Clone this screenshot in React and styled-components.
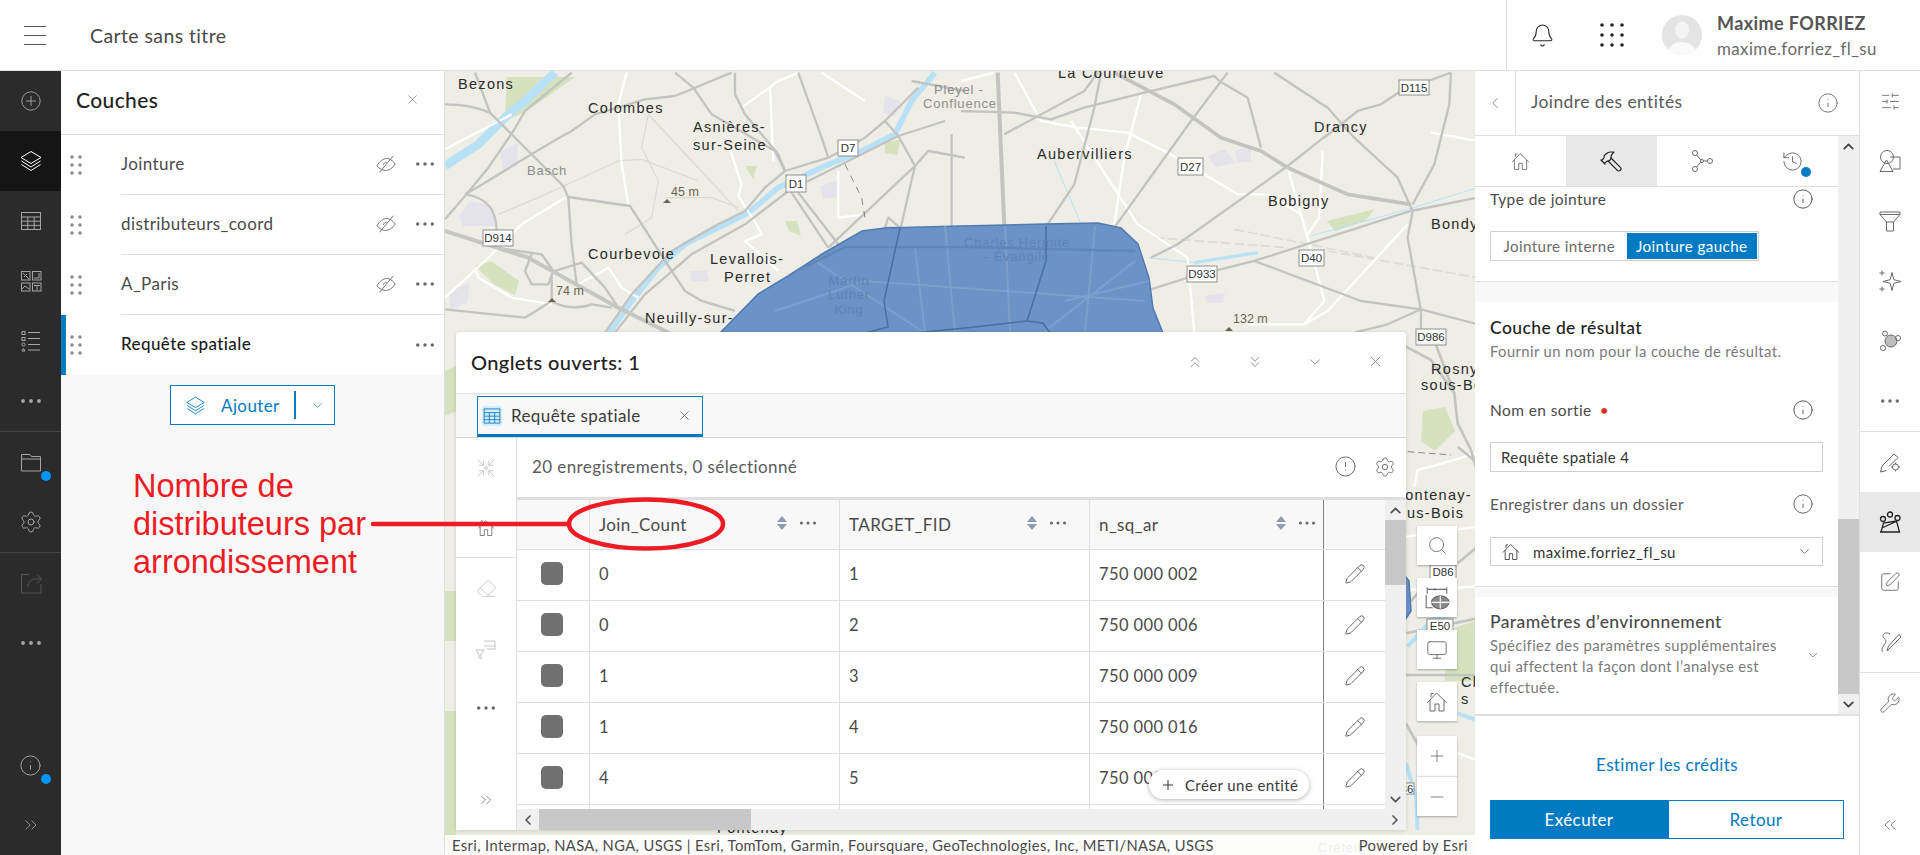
import styled, { createGlobalStyle } from 'styled-components';
import {
  Bell, Settings, Info, X, ChevronDown, ChevronUp, ChevronLeft, ChevronRight, ChevronsUp, ChevronsDown,
  ChevronsRight, ChevronsLeft, Hammer, History, SlidersHorizontal, SquarePen,
  Wrench, Search, Monitor, Plus, Minus, Pencil, CircleAlert, Eraser,
} from 'lucide-react';

const UI_FONT = 'Lato, "Noto Sans", sans-serif';
const BLUE = '#007ac2';

const GlobalStyle = createGlobalStyle`
  html, body {
    margin: 0;
    padding: 0;
    height: 855px;
    overflow: hidden;
    font-family: ${UI_FONT};
    letter-spacing: 0.4px;
    color: #4a4a4a;
  }
  * { box-sizing: border-box; }
`;

/* small hand drawn icons */
function Glyph({ size = 24, sw = 1, children }) {
  return (
    <svg width={size} height={size} viewBox="0 0 24 24" fill="none" stroke="currentColor" strokeWidth={sw}>
      {children}
    </svg>
  );
}

const Dots = ({ size = 22 }) => (
  <svg width={size} height={size} viewBox="0 0 22 22" fill="currentColor">
    <circle cx="3" cy="11" r="1.9" />
    <circle cx="11" cy="11" r="1.9" />
    <circle cx="19" cy="11" r="1.9" />
  </svg>
);

const DragHandle = () => (
  <svg width="12" height="20" viewBox="0 0 12 20" fill="#8c8c8c">
    {[2, 10, 18].map((y) => [2, 10].map((x) => <circle key={`${x}${y}`} cx={x} cy={y} r="1.8" />))}
  </svg>
);

const LayersIcon = ({ size = 24 }) => (
  <Glyph size={size}>
    <path d="M12 2.5 22 8.5 12 14.5 2 8.5z" />
    <path d="M2.5 12 12 18 21.5 12" />
    <path d="M2.5 15.5 12 21.5 21.5 15.5" />
  </Glyph>
);

const HomeIcon = ({ size = 24 }) => (
  <Glyph size={size}>
    <path d="M2.5 12.5 11.5 3l10 9.5" />
    <path d="M5 10v11h5v-7h4v7h5V10" />
    <path d="M6 7V3.5h2.5" />
  </Glyph>
);

const TableIcon = ({ size = 24 }) => (
  <Glyph size={size}>
    <rect x="2.5" y="3.5" width="19" height="17" />
    <path d="M2.5 8h19M2.5 12.2h19M2.5 16.4h19M8.8 8v12.5M15.2 8v12.5" />
  </Glyph>
);

const DashIcon = () => (
  <Glyph>
    <rect x="2.5" y="2.5" width="8.5" height="8.5" />
    <rect x="13.5" y="2.5" width="8.5" height="8.5" />
    <rect x="2.5" y="14" width="8.5" height="8" />
    <rect x="13.5" y="14" width="8.5" height="8" />
    <path d="M4 4l6 6M5 8l3-3M15 9h5V4M3 20l3-3 4 3M15 16.5h6M18 16.5v5" />
  </Glyph>
);

const ListIcon = () => (
  <Glyph>
    <path d="M9 3.5h12M9 9.5h12M9 15.5h12M9 21h12" />
    <rect x="3" y="2.5" width="3" height="3" />
    <rect x="3" y="8.5" width="3" height="3" />
    <circle cx="4.5" cy="15.5" r="1.6" />
    <path d="M3 22l1.5-2.5L6 22z" />
  </Glyph>
);

const FolderIcon = () => (
  <Glyph>
    <path d="M2.5 21V4.5h8.5l1.5 2h9V21z" />
    <path d="M2.5 9h19" />
  </Glyph>
);

const ShareIcon = () => (
  <Glyph>
    <path d="M10 3.5H2.5V22H22v-9" />
    <path d="M9 16c0-5 3-8 8-8h5M18 3.5 22.5 8 18 12.5" />
  </Glyph>
);

const CircleInfo = ({ size = 23 }) => <Info size={size} strokeWidth={1} />;

const HiddenEye = () => (
  <Glyph size={22}>
    <path d="M2 14c3-5 7-8 11-8 3 0 6 2 9 6-3 5-7 7-11 7-3 0-6-2-9-5z" />
    <path d="M5 21 20 3" />
    <path d="M9 13c1-2 2-3 4-3" />
  </Glyph>
);

const BranchIcon = () => (
  <Glyph>
    <circle cx="5" cy="4" r="2.5" />
    <circle cx="5" cy="20" r="2.5" />
    <circle cx="20" cy="12" r="2.5" />
    <circle cx="12" cy="12" r="1.5" />
    <path d="M6.5 6 11 11M6.5 18l4.500-5M13.500 12h4" />
  </Glyph>
);

const ClusterIcon = () => (
  <Glyph>
    <circle cx="13" cy="12" r="6" fill="#bdbdbd" />
    <circle cx="7" cy="4.500" r="2.500" />
    <circle cx="20" cy="9" r="2.500" />
    <circle cx="5" cy="19" r="2.500" />
  </Glyph>
);

const ShapesIcon = () => (
  <Glyph>
    <circle cx="9" cy="8" r="6.500" />
    <path d="M12 8h10v12h-7" />
    <path d="M2 22.500 8.500 11 15 22.500z" />
  </Glyph>
);

const FunnelIcon = () => (
  <Glyph>
    <path d="M2 3h20v2.500l-6.500 7.500v9h-7v-9L2 5.500z" />
    <path d="M2 5.500h20M8.500 13h7" />
  </Glyph>
);

const StarsIcon = () => (
  <Glyph>
    <path d="M14 3.500l1.800 7.200 7.200 1.800-7.200 1.800L14 21.500l-1.800-7.200-7.200-1.800 7.200-1.800z" />
    <path d="M4 1.500v5M1.500 4h5M4 17.500v5M1.500 20h5" />
  </Glyph>
);

const CollapseIcon = () => (
  <Glyph size={22}>
    <path d="M3 3l6 6M4 9h5V4M21 3l-6 6M20 9h-5V4M3 21l6-6M4 15h5v5M21 21l-6-6M20 15h-5v5" />
    <circle cx="12" cy="12" r="1.500" />
  </Glyph>
);

const PenGearIcon = () => (
  <Glyph>
    <path d="M2.500 22l1.500-6L16 4l4 3.500-9 9" />
    <path d="M2.500 22l6-1.500" />
    <circle cx="17.500" cy="17" r="3" />
    <path d="M17.500 12.500v1.500M17.500 20v1.500M13 17h1.500M20.500 17H22" />
  </Glyph>
);

const AnalysisIcon = () => (
  <Glyph sw={1.3}>
    <circle cx="5" cy="9" r="2.500" />
    <circle cx="12" cy="4.500" r="2.500" />
    <circle cx="19.500" cy="8" r="2.500" />
    <path d="M3 22l2.500-9 13-2 3 11zM5 17.500l13-6M2 22h20" />
  </Glyph>
);

const PenCurveIcon = () => (
  <Glyph>
    <path d="M9 21l1.500-5L21 4.500 23 7 12 18z" />
    <path d="M12 4C7 1 3 5 6 8c2 2 3 3 0 7-2 3-3 6-1 7" />
  </Glyph>
);

const FieldIcon = () => (
  <Glyph>
    <path d="M10 5h11v5H10M13 13h8v-3" />
    <path d="M2 14h8l-3 4v5l-2-1v-4z" />
  </Glyph>
);

const ScaleIcon = () => (
  <Glyph size={26}>
    <path d="M3 8V4h18v4M3 4V2M21 4V2M10 3v2" />
    <path d="M2 9v12h6" />
    <ellipse cx="15" cy="16" rx="8" ry="6" fill="#8a8a8a" />
    <path d="M7 16h16M15 10v12" stroke="#fff" />
  </Glyph>
);

/* page frame */
const Page = styled.div`
  position: relative;
  width: 1920px;
  height: 855px;
  display: flex;
  flex-direction: column;
  background: #fff;
  overflow: hidden;
`;

const Header = styled.header`
  height: 71px;
  flex: none;
  display: flex;
  align-items: center;
  border-bottom: 1px solid #dfdfdf;
`;

const Burger = styled.div`
  width: 90px;
  height: 70px;
  padding-left: 24px;
  display: flex;
  flex-direction: column;
  justify-content: center;
  gap: 8px;
  & > i {
    display: block;
    width: 22px;
    height: 1px;
    background: #555;
  }
`;

const MapTitle = styled.h1`
  margin: 0;
  flex: 1;
  font-size: 19.500px;
  font-weight: 400;
  color: #4a4a4a;
`;

const UserBlock = styled.div`
  width: 414px;
  height: 70px;
  border-left: 1px solid #dfdfdf;
  display: flex;
  align-items: center;
  color: #2b2b2b;
`;

const HeaderBtn = styled.div`
  width: 70px;
  display: flex;
  justify-content: center;
  flex: none;
`;

const Avatar = styled.div`
  width: 40px;
  height: 40px;
  margin-left: 15px;
  margin-right: 15px;
  border-radius: 50%;
  overflow: hidden;
  flex: none;
`;

const UserName = styled.div`
  font-size: 18px;
  font-weight: 700;
  line-height: 27px;
  color: #555;
`;

const UserLogin = styled.div`
  font-size: 16.900px;
  line-height: 23px;
  color: #6a6a6a;
`;

const Body = styled.div`
  flex: 1;
  display: flex;
  min-height: 0;
`;

/* action bars */
const Rail = styled.nav`
  width: ${(p) => p.$width}px;
  flex: none;
  display: flex;
  flex-direction: column;
  background: ${(p) => (p.$dark ? '#2b2b2b' : '#fff')};
  color: ${(p) => (p.$dark ? '#a5a5a5' : '#6a6a6a')};
  border-left: ${(p) => (p.$dark ? 'none' : '1px solid #dfdfdf')};
`;

const RailGroup = styled.div`
  display: flex;
  flex-direction: column;
  border-bottom: 1px solid ${(p) => (p.$dark ? '#444' : '#dfdfdf')};
`;

const RailEnd = styled.div`
  margin-top: auto;
  display: flex;
  flex-direction: column;
`;

const RailItem = styled.div`
  position: relative;
  height: 60px;
  display: flex;
  align-items: center;
  justify-content: center;
  background: ${(p) => p.$active || 'transparent'};
  color: ${(p) => p.$tint || 'inherit'};
`;

const BlueDot = styled.span`
  position: absolute;
  width: 10px;
  height: 10px;
  border-radius: 50%;
  right: ${(p) => p.$right}px;
  bottom: ${(p) => p.$bottom}px;
  background: ${(p) => p.$color || '#0095ff'};
`;

/* layers panel */
const LayersPanel = styled.aside`
  width: 384px;
  flex: none;
  display: flex;
  flex-direction: column;
  background: #f8f8f8;
  border-right: 1px solid #dfdfdf;
`;

const PanelHead = styled.div`
  height: 64px;
  padding: 0 24px 6px 15px;
  display: flex;
  align-items: center;
  justify-content: space-between;
  background: #fff;
  border-bottom: 1px solid #dfdfdf;
  color: #6a6a6a;
`;

const PanelTitle = styled.h2`
  margin: 0;
  font-size: 21px;
  font-weight: 500;
  color: #222;
`;

const LayerRow = styled.div`
  height: 60px;
  display: flex;
  background: #fff;
  border-left: ${(p) => (p.$selected ? `5px solid ${BLUE}` : '0')};
`;

const Handle = styled.div`
  width: ${(p) => (p.$selected ? 55 : 60)}px;
  flex: none;
  display: flex;
  align-items: center;
  padding-left: ${(p) => (p.$selected ? 4 : 9)}px;
`;

const LayerBody = styled.div`
  flex: 1;
  display: flex;
  align-items: center;
  padding-right: 9px;
  padding-bottom: 1px;
  border-bottom: ${(p) => (p.$last ? '0' : '1px solid #dfdfdf')};
  color: #6a6a6a;
`;

const LayerName = styled.span`
  flex: 1;
  padding-bottom: 2px;
  font-size: 17px;
  font-weight: ${(p) => (p.$selected ? 500 : 400)};
  color: ${(p) => (p.$selected ? '#1c1c1c' : '#4a4a4a')};
`;

const EyeSlot = styled.span`
  width: 22px;
  margin-right: 18px;
  display: flex;
`;

const AddBar = styled.div`
  display: flex;
  justify-content: center;
  padding-top: 10px;
`;

const AddButton = styled.div`
  width: 165px;
  height: 40px;
  display: flex;
  align-items: center;
  padding-left: 14px;
  border: 1px solid ${BLUE};
  background: #fff;
  color: ${BLUE};
  font-size: 17px;
`;

const AddLabel = styled.span`
  margin-left: 15px;
  width: 73px;
`;

const AddSplit = styled.span`
  width: 2px;
  height: 28px;
  margin-right: 14px;
  background: ${BLUE};
`;

/* map */
const MapArea = styled.main`
  position: relative;
  flex: 1;
  min-width: 0;
  overflow: hidden;
  background: #eeeee7;
`;

const MapCanvas = styled.svg`
  display: block;
`;

const TablePanel = styled.section`
  position: absolute;
  left: 11px;
  top: 261px;
  width: 950px;
  height: 498px;
  display: flex;
  flex-direction: column;
  background: #fff;
  border-radius: 4px 4px 0 0;
  box-shadow: 0 1px 4px rgba(0, 0, 0, 0.15);
  overflow: hidden;
`;

const TableTop = styled.div`
  height: 62px;
  flex: none;
  display: flex;
  align-items: center;
  padding: 0 1px 2px 15px;
  border-bottom: 1px solid #dfdfdf;
`;

const TableTitle = styled.h3`
  margin: 0;
  flex: 1;
  font-size: 20px;
  font-weight: 500;
  color: #222;
`;

const TopBtn = styled.span`
  width: 60px;
  display: flex;
  justify-content: center;
  color: #6a6a6a;
`;

const TabStrip = styled.div`
  height: 44px;
  flex: none;
  padding: 2px 0 0 21px;
  background: #f8f8f8;
  border-bottom: 1px solid #d5d5d5;
`;

const Tab = styled.div`
  width: 226px;
  height: 41px;
  display: flex;
  align-items: center;
  padding: 0 10px 0 4px;
  border: 1px solid ${BLUE};
  border-bottom-width: 3px;
  font-size: 17px;
  color: #3a3a3a;
`;

const TabLabel = styled.span`
  flex: 1;
  margin-left: 9px;
`;

const TabIcon = styled.span`
  display: flex;
  color: ${BLUE};
  & svg { background: #d7ecf9; }
`;

const TableMain = styled.div`
  flex: 1;
  min-height: 0;
  display: flex;
`;

const TableSide = styled.div`
  width: 61px;
  flex: none;
  display: flex;
  flex-direction: column;
  border-right: 1px solid #dfdfdf;
`;

const SideBtn = styled.div`
  height: 60px;
  flex: none;
  display: flex;
  align-items: center;
  justify-content: center;
  color: ${(p) => p.$tint || '#6a6a6a'};
  border-bottom: ${(p) => (p.$line ? '1px solid #dfdfdf' : '0')};
  margin-top: ${(p) => (p.$end ? 'auto' : '0')};
`;

const TableBody = styled.div`
  flex: 1;
  min-width: 0;
  display: flex;
  flex-direction: column;
`;

const InfoBar = styled.div`
  height: 62px;
  flex: none;
  display: flex;
  align-items: center;
  padding: 0 1px 2px 15px;
  border-bottom: 3px solid #dfdfdf;
  font-size: 17px;
  color: #5a5a5a;
`;

const InfoText = styled.span`
  flex: 1;
`;

const InfoBtn = styled.span`
  width: 40px;
  display: flex;
  justify-content: center;
  color: #6a6a6a;
`;

const GridWrap = styled.div`
  flex: 1;
  min-height: 0;
  display: flex;
`;

const Grid = styled.div`
  flex: 1;
  min-width: 0;
  overflow: hidden;
`;

const Row = styled.div`
  display: grid;
  grid-template-columns: 73px 250px 250px 234px 62px;
  height: ${(p) => (p.$head ? 50 : 51)}px;
  background: ${(p) => (p.$head ? '#f8f8f8' : '#fff')};
  border-bottom: 1px solid #dfdfdf;
`;

const Cell = styled.div`
  display: flex;
  align-items: center;
  padding: 0 ${(p) => p.$right || 7}px 3px 9px;
  font-size: 16.500px;
  color: #4a4a4a;
  border-right: 1px solid #dfdfdf;
  &:nth-child(4) { border-right-color: #808080; }
  &:last-child { border-right: 0; justify-content: center; color: #5a5a5a; padding: 0 0 2px; }
  &:first-child { justify-content: center; padding: 0 3px 4px 0; }
`;

const CellLabel = styled.span`
  flex: 1;
  padding-top: 2px;
  font-size: 17px;
`;

const Swatch = styled.span`
  width: 22px;
  height: 23px;
  border-radius: 5px;
  background: #707070;
`;

const SortArrows = styled.span`
  width: 10px;
  margin-right: 12px;
  display: flex;
  flex-direction: column;
  gap: 2px;
  &::before, &::after {
    content: '';
    border-left: 5px solid transparent;
    border-right: 5px solid transparent;
  }
  &::before { border-bottom: 6px solid #8f9bb0; }
  &::after { border-top: 6px solid #8f9bb0; }
`;

const ColDots = styled.span`
  display: flex;
  color: #6a6a6a;
`;

const VScroll = styled.div`
  width: 21px;
  flex: none;
  display: flex;
  flex-direction: column;
  align-items: center;
  background: #f0f0f0;
  color: #555;
`;

const VThumb = styled.div`
  width: 100%;
  height: 65px;
  margin-bottom: auto;
  background: #c8c8c8;
`;

const ArrowSlot = styled.span`
  height: 20px;
  flex: none;
  display: flex;
  align-items: center;
  justify-content: center;
`;

const HScroll = styled.div`
  height: 21px;
  flex: none;
  display: flex;
  align-items: center;
  background: #f0f0f0;
  color: #555;
`;

const HThumb = styled.div`
  width: 212px;
  height: 100%;
  margin-right: auto;
  background: #c8c8c8;
`;

const HArrow = styled.span`
  width: 22px;
  display: flex;
  justify-content: center;
  flex: none;
`;

const CreateChip = styled.div`
  position: absolute;
  right: 97px;
  bottom: 31px;
  width: 160px;
  height: 29px;
  display: flex;
  align-items: center;
  gap: 9px;
  padding-left: 11px;
  border-radius: 15px;
  background: #fff;
  box-shadow: 0 1px 5px rgba(0, 0, 0, 0.3);
  font-size: 15px;
  color: #3a3a3a;
`;

const Widgets = styled.div`
  position: absolute;
  top: 455px;
  left: 972px;
  display: flex;
  flex-direction: column;
  gap: 13px;
`;

const Widget = styled.div`
  width: 40px;
  height: ${(p) => p.$h || 39}px;
  display: flex;
  align-items: center;
  justify-content: center;
  background: #fff;
  color: #6a6a6a;
  box-shadow: 0 1px 2px rgba(0, 0, 0, 0.3);
  border-top: ${(p) => (p.$line ? '1px solid #dfdfdf' : '0')};
`;

const WidgetPair = styled.div`
  display: flex;
  flex-direction: column;
  margin-top: 2px;
`;

const Attribution = styled.div`
  position: absolute;
  left: 0;
  right: 0;
  bottom: 0;
  height: 20px;
  display: flex;
  justify-content: space-between;
  padding: 0 7px;
  background: rgba(255, 255, 255, 0.85);
  font-size: 14.700px;
  line-height: 20px;
  color: #4a4a4a;
  white-space: nowrap;
`;

/* tool panel */
const ToolPanel = styled.aside`
  width: 384px;
  flex: none;
  display: flex;
  flex-direction: column;
  background: #fff;
`;

const ToolHead = styled.div`
  height: 65px;
  flex: none;
  display: flex;
  align-items: center;
  border-bottom: 1px solid #dfdfdf;
`;

const BackBtn = styled.div`
  width: 41px;
  height: 100%;
  display: flex;
  align-items: center;
  justify-content: center;
  border-right: 1px solid #dfdfdf;
  color: #6a6a6a;
`;

const ToolTitle = styled.h2`
  margin: 0;
  flex: 1;
  padding: 0 0 4px 15px;
  font-size: 17.500px;
  font-weight: 400;
  color: #5a5a5a;
`;

const HeadInfo = styled.span`
  width: 45px;
  padding-left: 3px;
  display: flex;
  color: #6a6a6a;
`;

const ToolScroll = styled.div`
  flex: 1;
  min-height: 0;
  display: flex;
  border-bottom: 2px solid #dfdfdf;
`;

const ToolContent = styled.div`
  flex: 1;
  min-width: 0;
  display: flex;
  flex-direction: column;
  overflow: hidden;
  background: #f8f8f8;
`;

const ToolTabs = styled.div`
  height: 51px;
  flex: none;
  display: grid;
  grid-template-columns: repeat(4, 1fr);
  background: #fff;
  border-bottom: 1px solid #dfdfdf;
`;

const ToolTab = styled.div`
  position: relative;
  display: flex;
  align-items: center;
  justify-content: center;
  background: ${(p) => (p.$active ? '#e8e8e8' : 'transparent')};
  color: ${(p) => (p.$active ? '#222' : '#6a6a6a')};
`;

const Mirrored = styled.span`
  display: flex;
  transform: scaleX(-1);
`;

const Section = styled.section`
  flex: ${(p) => (p.$fill ? 1 : 'none')};
  background: #fff;
  padding: ${(p) => p.$pad};
  border-bottom: ${(p) => (p.$fill ? '0' : '1px solid #dfdfdf')};
  margin-bottom: ${(p) => p.$gap || 0}px;
`;

const FieldHead = styled.div`
  display: flex;
  align-items: center;
  justify-content: space-between;
  padding-right: 9px;
  margin-top: ${(p) => p.$top || 0}px;
  font-size: 15.500px;
  line-height: 20px;
  color: ${(p) => p.$tint || '#4a4a4a'};
  height: ${(p) => p.$h || 20}px;
`;

const Required = styled.span`
  color: #d83020;
  margin-left: 8px;
`;

const Segments = styled.div`
  width: 269px;
  height: 30px;
  margin-top: 20px;
  padding: 1px;
  display: flex;
  border: 1px solid #cfcfcf;
`;

const Segment = styled.span`
  width: ${(p) => p.$w}px;
  display: flex;
  align-items: center;
  justify-content: center;
  font-size: 15.200px;
  background: ${(p) => (p.$on ? BLUE : 'transparent')};
  color: ${(p) => (p.$on ? '#fff' : '#6a6a6a')};
`;

const SectionTitle = styled.h3`
  margin: 0;
  font-size: 17.500px;
  line-height: 22px;
  font-weight: 500;
  color: ${(p) => p.$tint || '#222'};
`;

const Hint = styled.p`
  margin: 2px 0 0;
  font-size: 14.800px;
  line-height: 21px;
  color: #7a7a7a;
`;

const Input = styled.div`
  width: 333px;
  height: ${(p) => p.$h}px;
  display: flex;
  align-items: center;
  padding: 0 10px;
  margin-top: ${(p) => p.$top}px;
  border: 1px solid #cfcfcf;
  font-size: 15px;
  color: #333;
  gap: 12px;
`;

const InputLabel = styled.span`
  flex: 1;
`;

const EnvRow = styled.div`
  display: flex;
  align-items: center;
`;

const EnvText = styled.div`
  width: 300px;
`;

const EnvChevron = styled.span`
  margin-left: 15px;
  display: flex;
  color: #6a6a6a;
`;

const ToolScrollbar = styled.div`
  width: 21px;
  flex: none;
  display: flex;
  flex-direction: column;
  background: #f0f0f0;
  color: #444;
  align-items: center;
`;

const ToolThumb = styled.div`
  width: 100%;
  height: 175px;
  margin-top: auto;
  background: #c8c8c8;
`;

const ToolFoot = styled.div`
  height: 139px;
  flex: none;
  display: flex;
  flex-direction: column;
  align-items: center;
  padding-top: 38px;
`;

const CreditsLink = styled.span`
  font-size: 16.900px;
  line-height: 22px;
  color: ${BLUE};
`;

const FootButtons = styled.div`
  display: grid;
  grid-template-columns: 178px 176px;
  height: 39px;
  margin-top: 24px;
`;

const FootButton = styled.div`
  display: flex;
  align-items: center;
  justify-content: center;
  font-size: 17px;
  border: 1px solid ${BLUE};
  background: ${(p) => (p.$primary ? BLUE : '#fff')};
  color: ${(p) => (p.$primary ? '#fff' : BLUE)};
`;

/* red annotation drawn over the page */
const NoteText = styled.div`
  position: absolute;
  left: 133px;
  top: 468px;
  font-family: "Liberation Sans", Arial, sans-serif;
  font-size: 32.500px;
  line-height: 37.800px;
  letter-spacing: 0;
  color: #ed1c24;
`;

const NoteMarks = styled.svg`
  position: absolute;
  left: 360px;
  top: 490px;
  pointer-events: none;
`;

/* map drawing, traced in zoomed coordinates and scaled back */
const greyA = [
  'M0 100C50 100 100 110 135 125L205 195L355 345L370 380L380 520L395 640',
  'M0 445L60 375L130 290L205 180L240 120L380 5',
  'M60 370C120 340 250 250 380 180L450 130L600 85L690 75L860 5',
  'M90 5L135 125',
  'M690 5L745 50L800 130L870 170L990 240L1020 300',
  'M60 370C130 380 155 420 155 480',
  'M370 378L555 405L680 600L720 660L770 690L870 720',
  'M150 530L290 550L325 600L310 640L260 640L240 600L260 550',
  'M330 600L410 575L480 650L520 710',
  'M320 690C350 710 400 715 440 700L500 710',
  'M0 715L240 740L320 690L320 610',
  'M480 785L560 670L680 540L800 470L900 420L960 350L1020 300L1150 260L1260 200L1320 150L1420 50',
  'M510 785L600 670L740 550L900 460L1030 360L1360 195L1500 150',
  'M1040 365L1150 530M1060 365L1180 520',
  'M1150 530L1410 285L1360 195L1320 150',
  'M1410 285L1365 480M1060 5L1130 200L1150 260M870 5L870 70L900 130L1000 250L1020 300',
  'M1400 30L1560 60M1520 190L1520 470M1410 285L1450 240L1560 260',
  'M1330 440L1365 470L1320 470Z',
];

const whiteA = [
  'M545 5L520 100L530 280L550 400',
  'M0 680L120 570L230 460L360 380',
  'M0 235L200 130',
  'M850 220L890 340L880 375L940 470L950 490L900 510L1000 600',
  'M400 640L490 590L530 650L580 680',
  'M90 590L100 620L200 680L320 700',
  'M890 110L1000 30L1060 5',
  'M975 50L985 270',
  'M1130 5L1260 90',
  'M1180 300L1180 440L1260 430',
];

const faintA = [
  'M610 130L590 230L640 330L620 440L540 490',
  'M610 130L880 420',
  'M520 270L590 265L760 330',
  'M660 380L800 380L880 410',
  'M160 430L280 380L520 270',
];

const greyB = [
  'M0 120L160 125L270 145L370 110L550 65L760 15L775 30',
  'M130 190L370 60L410 5',
  'M420 5L400 110L340 340L260 460',
  'M800 5L690 150L460 470',
  'M940 5L1100 110L1180 200L1310 320L1355 420L1340 500L1380 720L1380 785',
  'M775 30L860 80L900 230',
  'M1470 5L1465 100L1420 280L1355 400',
  'M1090 200L1190 120L1260 100L1320 60L1470 5',
  'M570 560L650 520L980 285L1100 190',
  'M570 655L680 620L880 570L1350 420L1550 380',
  'M880 570L1200 690L1380 715L1550 760',
  'M1180 785L1280 760L1380 715',
];

const whiteB = [
  'M0 30L100 5',
  'M160 5L240 150L350 170L500 185L620 245L730 310L830 370L920 370L1020 430',
  'M330 150L530 460L680 560L700 785',
  'M540 70L490 260L460 460',
  'M980 290L1040 500L1090 690L1030 760L860 760',
  'M1340 460L1100 720L1030 760',
  'M1410 185L1550 210',
  'M1085 240L1075 440L1040 490',
];

const greyC = [
  'M345 50L420 90L490 190L500 280L540 360L560 430',
  'M420 5L490 190',
  'M500 350L560 400',
  'M345 910L560 865',
  'M345 1035L560 1035',
  'M500 700L560 650',
  'M345 830L380 790',
  'M345 1180L400 1280',
];

const whiteC = [
  'M370 470L380 420L440 405L555 370',
  'M345 620L560 590',
  'M345 780L560 770',
  'M420 1240L555 1290',
];

const labels = [
  ['Bezons', 13, 18],
  ['Colombes', 143, 42],
  ['Asnières-', 248, 61],
  ['sur-Seine', 248, 79],
  ['Courbevoie', 143, 188],
  ['Levallois-', 265, 193],
  ['Perret', 279, 211],
  ['Neuilly-sur-', 200, 252],
  ['La Courneuve', 613, 7],
  ['Aubervilliers', 592, 88],
  ['Drancy', 869, 61],
  ['Bobigny', 823, 135],
  ['Bondy', 986, 158],
  ['Rosny-', 986, 303],
  ['sous-Bois', 976, 319],
  ['Fontenay-', 950, 429],
  ['sous-Bois', 944, 447],
  ['Cl', 1016, 616],
  ['s', 1016, 633],
  ['Fontenay-', 272, 762],
];

const softLabels = [
  ['Basch', 82, 104],
  ['Pleyel -', 489, 23],
  ['Confluence', 478, 37],
  ['Vitry-sur', 633, 778],
  ['Seine', 650, 795],
  ['Créteil', 873, 781],
];

const shields = [
  ['D7', 393, 69, 20, 16],
  ['D1', 341, 104, 20, 17],
  ['D914', 38, 159, 30, 16],
  ['D115', 954, 9, 30, 15],
  ['D27', 733, 87, 25, 17],
  ['D40', 854, 179, 25, 16],
  ['D933', 742, 195, 30, 16],
  ['D986', 971, 258, 30, 16],
  ['D86', 985, 494, 26, 14],
  ['E50', 982, 548, 26, 14],
  ['36', 955, 712, 14, 11],
];

const parks = [
  'M30 195L46 190L74 210L70 224L50 214Z',
  'M300 95L312 95L308 108Z',
  'M440 72L456 68L452 84L440 82Z',
  'M340 150L352 150L356 165L344 160Z',
  'M882 150L930 138L920 150L890 160Z',
  'M978 340L1000 336L1010 360L990 380L976 370Z',
  'M1000 560L1031 550L1031 610L1000 610Z',
  'M0 300L11 295L11 340L0 345Z',
  'M0 520L11 520L11 570L0 570Z',
  'M0 640L11 640L11 780L0 780Z',
  'M62 6L130 6L82 40L60 50Z',
];

const blocks = [
  'M55 80L73 72L72 95L58 98Z',
  'M25 130L48 135L50 155L18 155L14 145Z',
  'M5 220L25 212L22 232L5 238Z',
  'M375 115L392 110L396 125L378 128Z',
  'M245 200L262 200L264 210L246 210Z',
  'M763 85L780 78L790 92L770 96Z',
  'M790 80L806 75L806 90L792 92Z',
  'M440 25L455 30L450 45L438 42Z',
  'M760 225L780 222L778 232L762 232Z',
];

const districts = [
  'M455 157L439 230L443 256L420 262',
  'M601 155L601 190L582 250L530 256',
  'M582 250L598 252L605 262',
  'M420 262L470 262L530 256',
];

const streets = [
  'M370 190L480 262M470 176L480 262M560 155L565 262',
  'M600 260L690 190M620 230L704 210',
  'M330 240L420 210L700 230',
  'M500 155L510 262M650 155L640 262',
];

function MapDrawing() {
  return (
    <MapCanvas width="1031" height="784" viewBox="0 0 1031 784" fontFamily='"Liberation Sans", sans-serif' letterSpacing="0">
      {parks.map((d) => <path key={d} d={d} fill="#d5e2bd" />)}
      {blocks.map((d) => <path key={d} d={d} fill="#e4e2ea" />)}
      <g transform="scale(0.3333)" fill="none" strokeLinejoin="round">
        <path d="M0 285L100 220L180 140L240 90L330 5" stroke="#b8e1f6" strokeWidth="26" />
        <path d="M490 790L560 690L640 590L720 520L830 465L910 425L1000 350L1140 285L1250 240L1350 190L1400 90L1470 5" stroke="#b8e1f6" strokeWidth="17" />
        {faintA.map((d) => <path key={d} d={d} stroke="#dcdcd6" strokeWidth="4" />)}
        {whiteA.map((d) => <path key={d} d={d} stroke="#fff" strokeWidth="7" />)}
        {greyA.map((d) => <path key={d} d={d} stroke="#c3c3c1" strokeWidth="7" />)}
        <path d="M0 480L250 560L520 710L680 790" stroke="#c6c6c2" strokeWidth="12" />
        <path d="M1200 280L1250 380L1260 440" stroke="#555" strokeWidth="2" strokeDasharray="20 18" />
      </g>
      <g transform="translate(516 0) scale(0.3333)" fill="none" strokeLinejoin="round">
        <path d="M1050 495L1340 415L1550 350M280 270L360 460M560 560L700 575" stroke="#b8e1f6" strokeWidth="3" />
        <path d="M700 575L890 545" stroke="#b8e1f6" strokeWidth="10" />
        <path d="M580 500L980 530M820 475L1240 560M1100 540L1550 620" stroke="#dcdcd6" strokeWidth="5" strokeDasharray="30 10" />
        {whiteB.map((d) => <path key={d} d={d} stroke="#fff" strokeWidth="7" />)}
        {greyB.map((d) => <path key={d} d={d} stroke="#c3c3c1" strokeWidth="7" />)}
        <path d="M110 5L120 240L130 465" stroke="#c3c3c1" strokeWidth="12" />
        <path d="M460 5L640 100L780 200L900 240L980 290L1160 370L1350 400" stroke="#c3c3c1" strokeWidth="11" />
      </g>
      <g transform="translate(846 259) scale(0.3333)" fill="none">
        {whiteC.map((d) => <path key={d} d={d} stroke="#fff" strokeWidth="7" />)}
        {greyC.map((d) => <path key={d} d={d} stroke="#c3c3c1" strokeWidth="8" />)}
        <path d="M500 850L420 870L350 950" stroke="#b8e1f6" strokeWidth="12" />
        <path d="M345 1300L375 1400L380 1500M500 1150L555 1170" stroke="#b8e1f6" strokeWidth="12" />
        <path d="M350 365L480 375" stroke="#555" strokeWidth="2" strokeDasharray="20 12" />
      </g>
      <path
        d="M275 262L313 223L343 205L377 183L417 160L440 157L516 155L599 153L653 152L676 157L693 173L704 207L708 237L718 262L800 300L964 510L966 540L900 640L300 640Z"
        fill="#6b93c7"
        stroke="#4f7bb0"
        strokeWidth="1.500"
      />
      {streets.map((d) => <path key={d} d={d} fill="none" stroke="#7c9fcd" strokeWidth="2" />)}
      <path d="M352 200L400 176L520 176L690 180" fill="none" stroke="#5f87bb" strokeWidth="2.500" />
      {districts.map((d) => <path key={d} d={d} fill="none" stroke="#4a6f9f" strokeWidth="1.500" />)}
      <g fontSize="13" fill="#5f83b3" letterSpacing="0.800" textAnchor="middle">
        <text x="404" y="214">Martin</text>
        <text x="404" y="228">Luther</text>
        <text x="404" y="243">King</text>
        <text x="572" y="176">Charles Hermite</text>
        <text x="572" y="190">- Évangile</text>
      </g>
      <g fontSize="14.500" fill="#2a2a2a" letterSpacing="1.300">
        {labels.map(([t, x, y]) => <text key={`${t}${y}`} x={x} y={y}>{t}</text>)}
      </g>
      <g fontSize="13" fill="#8d8d8d" letterSpacing="0.800">
        {softLabels.map(([t, x, y]) => <text key={t} x={x} y={y}>{t}</text>)}
      </g>
      <g fontSize="12.500" fill="#6c6650">
        <text x="226" y="125">45 m</text>
        <text x="111" y="224">74 m</text>
        <text x="788" y="252">132 m</text>
        <path d="M222 128l-4 4h8zM107 227l-4 4h8zM784 256l-4 4h8z" />
      </g>
      <g fontSize="11.500" fill="#333" textAnchor="middle">
        {shields.map(([t, x, y, w, h]) => (
          <g key={t}>
            <rect x={x} y={y} width={w} height={h} fill="#fff" stroke="#8e8e8e" />
            <text x={x + w / 2} y={y + h / 2 + 4}>{t}</text>
          </g>
        ))}
      </g>
    </MapCanvas>
  );
}

const rows = [
  ['0', '1', '750 000 002'],
  ['0', '2', '750 000 006'],
  ['1', '3', '750 000 009'],
  ['1', '4', '750 000 016'],
  ['4', '5', '750 000 019'],
];

const layers = ['Jointure', 'distributeurs_coord', 'A_Paris'];

const columns = [
  ['Join_Count', 22],
  ['TARGET_FID', 22],
  ['n_sq_ar', 7],
];

function TableView() {
  return (
    <TablePanel>
      <TableTop>
        <TableTitle>Onglets ouverts: 1</TableTitle>
        <TopBtn><ChevronsUp size={18} strokeWidth={1} /></TopBtn>
        <TopBtn><ChevronsDown size={18} strokeWidth={1} /></TopBtn>
        <TopBtn><ChevronDown size={18} strokeWidth={1} /></TopBtn>
        <TopBtn><X size={17} strokeWidth={1} /></TopBtn>
      </TableTop>
      <TabStrip>
        <Tab>
          <TabIcon><TableIcon size={20} /></TabIcon>
          <TabLabel>Requête spatiale</TabLabel>
          <X size={15} strokeWidth={1} />
        </Tab>
      </TabStrip>
      <TableMain>
        <TableSide>
          <SideBtn $tint="#c4c4c4"><CollapseIcon /></SideBtn>
          <SideBtn $line><HomeIcon size={20} /></SideBtn>
          <SideBtn $tint="#c4c4c4"><Eraser size={21} strokeWidth={1} /></SideBtn>
          <SideBtn $tint="#c4c4c4"><FieldIcon /></SideBtn>
          <SideBtn><Dots size={20} /></SideBtn>
          <SideBtn $end><ChevronsRight size={18} strokeWidth={1} /></SideBtn>
        </TableSide>
        <TableBody>
          <InfoBar>
            <InfoText>20 enregistrements, 0 sélectionné</InfoText>
            <InfoBtn><CircleAlert size={23} strokeWidth={1} /></InfoBtn>
            <InfoBtn><Settings size={22} strokeWidth={1} /></InfoBtn>
          </InfoBar>
          <GridWrap>
            <Grid>
              <Row $head>
                <Cell />
                {columns.map(([name, right]) => (
                  <Cell key={name} $right={right}>
                    <CellLabel>{name}</CellLabel>
                    <SortArrows />
                    <ColDots><Dots size={18} /></ColDots>
                  </Cell>
                ))}
                <Cell />
              </Row>
              {rows.map((r) => (
                <Row key={r[1]}>
                  <Cell><Swatch /></Cell>
                  {r.map((v, i) => <Cell key={i}>{v}</Cell>)}
                  <Cell><Pencil size={22} strokeWidth={1} /></Cell>
                </Row>
              ))}
              <Row>
                <Cell /><Cell /><Cell /><Cell /><Cell />
              </Row>
            </Grid>
            <VScroll>
              <ArrowSlot><ChevronUp size={17} strokeWidth={2.500} /></ArrowSlot>
              <VThumb />
              <ArrowSlot><ChevronDown size={17} strokeWidth={2.500} /></ArrowSlot>
            </VScroll>
          </GridWrap>
          <HScroll>
            <HArrow><ChevronLeft size={16} strokeWidth={2.500} /></HArrow>
            <HThumb />
            <HArrow><ChevronRight size={16} strokeWidth={2.500} /></HArrow>
          </HScroll>
        </TableBody>
      </TableMain>
      <CreateChip>
        <Plus size={16} strokeWidth={1.500} />
        Créer une entité
      </CreateChip>
    </TablePanel>
  );
}

export default function App() {
  return (
    <Page>
      <GlobalStyle />
      <Header>
        <Burger><i /><i /><i /></Burger>
        <MapTitle>Carte sans titre</MapTitle>
        <UserBlock>
          <HeaderBtn><Bell size={25} strokeWidth={1} /></HeaderBtn>
          <HeaderBtn>
            <svg width="24" height="24" viewBox="0 0 24 24" fill="#222">
              {[2, 12, 22].map((y) => [2, 12, 22].map((x) => <circle key={`${x}${y}`} cx={x} cy={y} r="1.800" />))}
            </svg>
          </HeaderBtn>
          <Avatar>
            <svg width="40" height="40" viewBox="0 0 40 40">
              <rect width="40" height="40" fill="#e4e4e4" />
              <ellipse cx="20" cy="15" rx="7" ry="8.500" fill="#f4f4f4" />
              <path d="M5 40c1-9 8-13 15-13s14 4 15 13z" fill="#fafafa" />
            </svg>
          </Avatar>
          <div>
            <UserName>Maxime FORRIEZ</UserName>
            <UserLogin>maxime.forriez_fl_su</UserLogin>
          </div>
        </UserBlock>
      </Header>
      <Body>
        <Rail $dark $width={61}>
          <RailGroup $dark>
            <RailItem><Glyph size={22}><circle cx="12" cy="12" r="10" /><path d="M12 6.500v11M6.500 12h11" /></Glyph></RailItem>
            <RailItem $active="#151515" $tint="#fff"><LayersIcon /></RailItem>
            <RailItem><TableIcon /></RailItem>
            <RailItem><DashIcon /></RailItem>
            <RailItem><ListIcon /></RailItem>
            <RailItem><Dots /></RailItem>
          </RailGroup>
          <RailGroup $dark>
            <RailItem><FolderIcon /><BlueDot $right={10} $bottom={11} /></RailItem>
            <RailItem><Settings size={24} strokeWidth={1} /></RailItem>
          </RailGroup>
          <RailItem $tint="#555"><ShareIcon /></RailItem>
          <RailItem><Dots /></RailItem>
          <RailEnd>
            <RailItem><CircleInfo /><BlueDot $right={10} $bottom={11} /></RailItem>
            <RailItem><ChevronsRight size={20} strokeWidth={1} /></RailItem>
          </RailEnd>
        </Rail>

        <LayersPanel>
          <PanelHead>
            <PanelTitle>Couches</PanelTitle>
            <X size={15} strokeWidth={1} />
          </PanelHead>
          {layers.map((name) => (
            <LayerRow key={name}>
              <Handle><DragHandle /></Handle>
              <LayerBody>
                <LayerName>{name}</LayerName>
                <EyeSlot><HiddenEye /></EyeSlot>
                <Dots size={20} />
              </LayerBody>
            </LayerRow>
          ))}
          <LayerRow $selected>
            <Handle $selected><DragHandle /></Handle>
            <LayerBody $last>
              <LayerName $selected>Requête spatiale</LayerName>
              <Dots size={20} />
            </LayerBody>
          </LayerRow>
          <AddBar>
            <AddButton>
              <LayersIcon size={21} />
              <AddLabel>Ajouter</AddLabel>
              <AddSplit />
              <ChevronDown size={15} strokeWidth={1.200} />
            </AddButton>
          </AddBar>
        </LayersPanel>

        <MapArea>
          <MapDrawing />
          <TableView />
          <Widgets>
            <Widget><Search size={21} strokeWidth={1} /></Widget>
            <Widget><ScaleIcon /></Widget>
            <Widget><Monitor size={22} strokeWidth={1} /></Widget>
            <Widget><HomeIcon /></Widget>
            <WidgetPair>
              <Widget $h={40}><Plus size={20} strokeWidth={1} /></Widget>
              <Widget $h={40} $line><Minus size={20} strokeWidth={1} /></Widget>
            </WidgetPair>
          </Widgets>
          <Attribution>
            <span>Esri, Intermap, NASA, NGA, USGS | Esri, TomTom, Garmin, Foursquare, GeoTechnologies, Inc, METI/NASA, USGS</span>
            <span>Powered by Esri</span>
          </Attribution>
        </MapArea>

        <ToolPanel>
          <ToolHead>
            <BackBtn><ChevronLeft size={18} strokeWidth={1} /></BackBtn>
            <ToolTitle>Joindre des entités</ToolTitle>
            <HeadInfo><CircleInfo size={22} /></HeadInfo>
          </ToolHead>
          <ToolScroll>
            <ToolContent>
              <ToolTabs>
                <ToolTab><HomeIcon size={21} /></ToolTab>
                <ToolTab $active><Mirrored><Hammer size={24} strokeWidth={1.200} /></Mirrored></ToolTab>
                <ToolTab><BranchIcon /></ToolTab>
                <ToolTab>
                  <History size={23} strokeWidth={1} />
                  <BlueDot $right={27} $bottom={9} $color={BLUE} />
                </ToolTab>
              </ToolTabs>
              <Section $pad="0 15px 20px" $gap={20}>
                <FieldHead $h={24}>Type de jointure<CircleInfo size={22} /></FieldHead>
                <Segments>
                  <Segment $w={135}>Jointure interne</Segment>
                  <Segment $w={131} $on>Jointure gauche</Segment>
                </Segments>
              </Section>
              <Section $pad="15px 15px 20px" $gap={10}>
                <SectionTitle>Couche de résultat</SectionTitle>
                <Hint>Fournir un nom pour la couche de résultat.</Hint>
                <FieldHead $h={24} $top={36}>
                  <span>Nom en sortie<Required>•</Required></span>
                  <CircleInfo size={22} />
                </FieldHead>
                <Input $h={30} $top={20}>Requête spatiale 4</Input>
                <FieldHead $h={24} $top={20} $tint="#5a5a5a">
                  Enregistrer dans un dossier
                  <CircleInfo size={22} />
                </FieldHead>
                <Input $h={29} $top={21}>
                  <HomeIcon size={20} />
                  <InputLabel>maxime.forriez_fl_su</InputLabel>
                  <ChevronDown size={15} strokeWidth={1} />
                </Input>
              </Section>
              <Section $fill $pad="14px 15px 0">
                <EnvRow>
                  <EnvText>
                    <SectionTitle $tint="#4a4a4a">Paramètres d’environnement</SectionTitle>
                    <Hint>Spécifiez des paramètres supplémentaires qui affectent la façon dont l’analyse est effectuée.</Hint>
                  </EnvText>
                  <EnvChevron><ChevronDown size={16} strokeWidth={1} /></EnvChevron>
                </EnvRow>
              </Section>
            </ToolContent>
            <ToolScrollbar>
              <ArrowSlot><ChevronUp size={17} strokeWidth={2.500} /></ArrowSlot>
              <ToolThumb />
              <ArrowSlot><ChevronDown size={17} strokeWidth={2.500} /></ArrowSlot>
            </ToolScrollbar>
          </ToolScroll>
          <ToolFoot>
            <CreditsLink>Estimer les crédits</CreditsLink>
            <FootButtons>
              <FootButton $primary>Exécuter</FootButton>
              <FootButton>Retour</FootButton>
            </FootButtons>
          </ToolFoot>
        </ToolPanel>

        <Rail $width={61}>
          <RailGroup>
            <RailItem><SlidersHorizontal size={21} strokeWidth={1} /></RailItem>
            <RailItem><ShapesIcon /></RailItem>
            <RailItem><FunnelIcon /></RailItem>
            <RailItem><StarsIcon /></RailItem>
            <RailItem><ClusterIcon /></RailItem>
            <RailItem><Dots size={20} /></RailItem>
          </RailGroup>
          <RailGroup>
            <RailItem><PenGearIcon /></RailItem>
            <RailItem $active="#e8e8e8" $tint="#222"><AnalysisIcon /></RailItem>
            <RailItem><SquarePen size={22} strokeWidth={1} /></RailItem>
            <RailItem><PenCurveIcon /></RailItem>
          </RailGroup>
          <RailItem><Wrench size={22} strokeWidth={1} /></RailItem>
          <RailEnd>
            <RailItem><ChevronsLeft size={20} strokeWidth={1} /></RailItem>
          </RailEnd>
        </Rail>
      </Body>

      <NoteText>Nombre de<br />distributeurs par<br />arrondissement</NoteText>
      <NoteMarks width="380" height="70" viewBox="0 0 380 70" fill="none" stroke="#ed1c24" strokeWidth="4.500">
        <path d="M13 34H209" strokeLinecap="round" />
        <ellipse cx="286" cy="34" rx="77" ry="24.500" />
      </NoteMarks>
    </Page>
  );
}
